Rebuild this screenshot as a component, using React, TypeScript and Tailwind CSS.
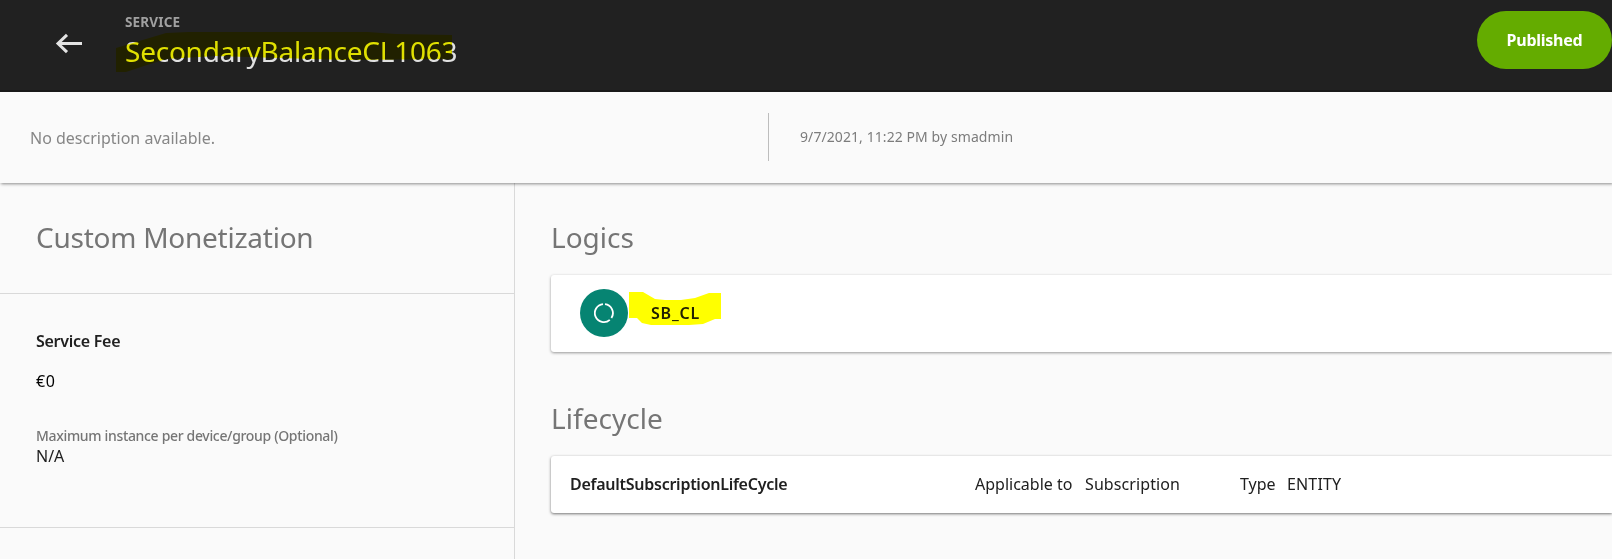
import React from "react";

export default function App() {
  return (
    <div className="flex h-[559px] w-full flex-col overflow-hidden bg-[#fafafa] font-['Noto_Sans',sans-serif] text-[#202020]">
      <header className="z-20 flex h-[92px] shrink-0 items-start border-b-2 border-[#191919] bg-[#212121]">
        <button aria-label="Back" className="ml-[55px] mt-[33px] h-[21px] w-[28px] shrink-0">
          <svg width="28" height="21" viewBox="0 0 28 21" fill="none" stroke="#e4e4e4" strokeWidth="3">
            <path d="M3 10.5H27M12 1.8L3 10.5L12 19.2" />
          </svg>
        </button>
        <div className="relative ml-[42px] mt-[13px] flex flex-col items-start">
          <p className="h-[18px] text-[13.5px] font-bold leading-[18px] tracking-[0.15px] text-[#a0a0a0]">SERVICE</p>
          <h1 className="h-[40px] whitespace-nowrap text-[28px] font-normal leading-[40px] tracking-[-0.23px] text-[#e0e0e0]">SecondaryBalanceCL1063</h1>
          <svg className="pointer-events-none absolute left-[-9px] top-[18px] mix-blend-multiply" width="337" height="42" viewBox="0 0 337 42" fill="#ffff00">
            <path d="M0 17L50 2L72 1H252L280 3L336 4V28L230 29L100 25L50 28L28 35L10 41H0Z" />
          </svg>
        </div>
        <button className="ml-auto mt-[11px] h-[58px] w-[135px] shrink-0 rounded-full bg-[#64ac00] text-[16px] font-bold tracking-[-0.25px] text-white">Published</button>
      </header>

      <section className="z-10 flex h-[91px] shrink-0 items-center bg-[#fafafa] shadow-[1px_1px_3px_rgba(0,0,0,0.45)]">
        <p className="w-[768px] pl-[30px] text-[16px] text-[#868686]">No description available.</p>
        <div className="mb-[2px] flex h-[48px] items-center border-l border-[#bdbdbd] pl-[31px]">
          <p className="text-[14px] tracking-[0.08px] text-[#7c7c7c]">9/7/2021, 11:22 PM by smadmin</p>
        </div>
      </section>

      <main className="flex min-h-0 flex-1">
        <aside className="w-[515px] shrink-0 border-r border-[#d9d9d9]">
          <div className="h-[111px] border-b border-[#d9d9d9] pl-[36px] pt-[34px]">
            <h2 className="text-[28px] leading-[40px] tracking-[-0.25px] text-[#757575]">Custom Monetization</h2>
          </div>
          <div className="flex h-[234px] flex-col items-start border-b border-[#d9d9d9] pl-[36px] pt-[35px]">
            <h3 className="text-[16px] font-semibold leading-[24px] tracking-[-0.27px]">Service Fee</h3>
            <p className="mt-[16px] text-[16px] leading-[24px] tracking-[0.6px] text-black">€0</p>
            <p className="mt-[33px] text-[14px] font-medium leading-[20px] tracking-[-0.33px] text-[#757575]">Maximum instance per device/group (Optional)</p>
            <p className="text-[16px] leading-[20px]">N/A</p>
          </div>
        </aside>
        <div className="min-w-0 flex-1 pl-[36px] pt-[34px]">
          <h2 className="text-[28px] leading-[40px] text-[#757575]">Logics</h2>
          <div className="mt-[18px] flex h-[77px] items-center rounded-l-[3px] bg-white pb-[2px] pl-[29px] shadow-[0_1px_3px_rgba(0,0,0,0.4)]">
            <div className="flex h-[48px] w-[48px] items-center justify-center rounded-full bg-[#068472]">
              <svg width="20" height="20" viewBox="0 0 20 20" fill="none" stroke="white" strokeWidth="1.8">
                <path d="M11 1.1A9 9 0 0 1 17.4 15M15.8 16.8A9 9 0 1 1 9 1.1" />
              </svg>
            </div>
            <div className="relative ml-[23px]">
              <p className="text-[16px] font-semibold tracking-[0.8px]">SB_CL</p>
              <svg className="pointer-events-none absolute left-[-22px] top-[-9px] mix-blend-multiply" width="92" height="34" viewBox="0 0 92 34" fill="#ffff00">
                <path d="M0 0H14L26 7L36 8H52L66 6L80 1H92V27H86L74 32L60 33H22L13 31L8 26H0Z" />
              </svg>
            </div>
          </div>
          <h2 className="mt-[46px] text-[28px] leading-[40px] tracking-[0.05px] text-[#757575]">Lifecycle</h2>
          <div className="mt-[18px] flex h-[57px] items-center whitespace-nowrap rounded-l-[3px] bg-white pb-[2px] pl-[19px] text-[16px] shadow-[0_1px_3px_rgba(0,0,0,0.55)]">
            <p className="w-[405px] font-semibold tracking-[-0.26px]">DefaultSubscriptionLifeCycle</p>
            <p className="w-[110px]">Applicable to</p>
            <p className="w-[155px] tracking-[0.1px]">Subscription</p>
            <p className="w-[47px]">Type</p>
            <p className="tracking-[0.15px]">ENTITY</p>
          </div>
        </div>
      </main>
    </div>
  );
}
